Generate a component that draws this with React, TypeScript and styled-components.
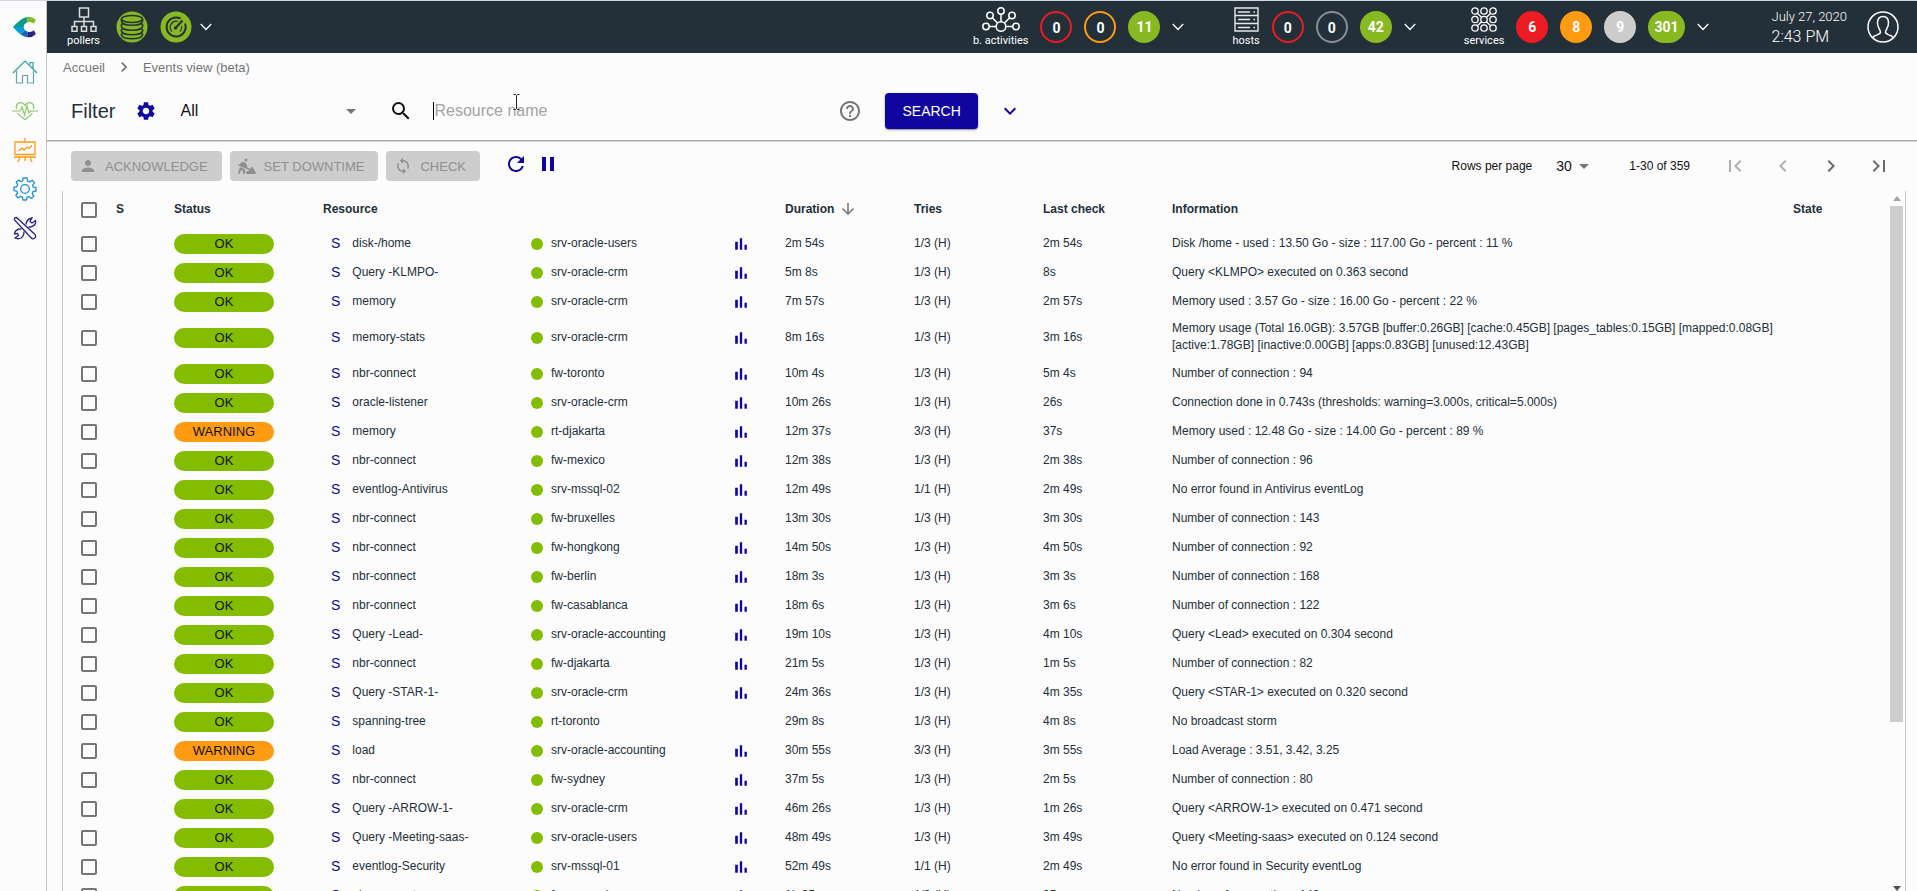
import React from "react";
import styled, { createGlobalStyle } from "styled-components";
import {
  MdArrowDownward,
  MdArrowDropDown,
  MdChevronLeft,
  MdChevronRight,
  MdExpandMore,
  MdFirstPage,
  MdHelpOutline,
  MdLastPage,
  MdPause,
  MdPerson,
  MdRefresh,
  MdSearch,
  MdSettings,
  MdSync,
} from "react-icons/md";
import { FaPersonDigging } from "react-icons/fa6";

const GlobalStyle = createGlobalStyle`
  *, *::before, *::after { box-sizing: border-box; }
  body {
    margin: 0;
    background: #fcfcfc;
    color: #232f39;
    font-family: "Liberation Sans", Arial, sans-serif;
    font-size: 12px;
    line-height: 17px;
  }
  button, input, select { font-family: inherit; }
  svg { display: block; flex: none; }
`;

const palette = {
  navy: "#10069f",
  ok: "#84bd00",
  green: "#88b922",
  orange: "#ff9a13",
  red: "#ed1c24",
  grey: "#cdcdcd",
  bar: "#232f39",
};

const Shell = styled.div`
  display: flex;
  height: 100vh;
  overflow: hidden;
  border-top: 1px solid #d2d6e2;
`;

const Sidebar = styled.nav`
  display: flex;
  flex-direction: column;
  align-items: center;
  width: 47px;
  padding: 12px 0 0 3px;
  border-right: 1px solid #c4c4c8;
  flex: none;
`;

const SideLink = styled.a`
  display: flex;
  align-items: center;
  justify-content: center;
  width: 28px;
  height: 39px;
`;

const LogoLink = styled(SideLink)`
  height: 28px;
  margin-bottom: 11px;
`;

const Main = styled.main`
  display: flex;
  flex-direction: column;
  flex: 1;
  min-width: 0;
`;

const TopBar = styled.header`
  display: flex;
  align-items: center;
  height: 52px;
  flex: none;
  padding: 0 18px 0 20px;
  background: ${palette.bar};
  color: #fff;
  font-family: Roboto, sans-serif;
`;

const PollerGroup = styled.div`
  display: flex;
  align-items: center;
  gap: 8px;
  margin-right: auto;
`;

const PollerBadges = styled.div`
  display: flex;
  gap: 12px;
  margin-left: 8px;
`;

const StatusGroup = styled.div`
  display: flex;
  align-items: center;
  gap: 12px;
  margin-right: 48px;
`;

const IconLabel = styled.a`
  display: flex;
  flex-direction: column;
  align-items: center;
  gap: 2px;
  color: #fff;
  font-size: 11px;
  line-height: 14px;
  text-decoration: none;
  white-space: nowrap;
`;

const Badge = styled.a<{ $color: string; $outlined?: boolean }>`
  display: flex;
  align-items: center;
  justify-content: center;
  min-width: 32px;
  height: 32px;
  padding: ${(p) => (p.$outlined ? "2px 0 0" : "0 4px")};
  border: 2px solid ${(p) => p.$color};
  border-radius: 16px;
  background: ${(p) => (p.$outlined ? "transparent" : p.$color)};
  color: #fff;
  font-size: 14px;
  font-weight: 700;
  text-decoration: none;
`;

const BareButton = styled.button<{ $color?: string }>`
  display: flex;
  align-items: center;
  justify-content: center;
  padding: 0;
  border: 0;
  background: none;
  color: ${(p) => p.$color ?? "inherit"};
`;

const Clock = styled.div`
  margin: 0 20px 0 15px;
  font-size: 13px;
  font-weight: 300;
  line-height: 20px;
`;

const ClockTime = styled.div`
  font-size: 16px;
`;

const Breadcrumb = styled.nav`
  display: flex;
  align-items: center;
  gap: 9px;
  height: 28px;
  padding-left: 16px;
  flex: none;
  color: #757575;
  font-size: 13px;

  a {
    color: inherit;
    text-decoration: none;
  }
`;

const FilterBar = styled.form`
  display: flex;
  align-items: center;
  height: 60px;
  padding: 0 24px;
  flex: none;
  border-bottom: 1px solid #a6a6a6;
  box-shadow: 0 1px 0 #d4d4d4;
`;

const FilterTitle = styled.h1`
  margin: 0 20px 0 0;
  font-size: 20px;
  font-weight: 400;
  line-height: 24px;
`;

const SelectBox = styled.span<{ $width: number; $size: number; $indent?: number }>`
  display: grid;
  align-items: center;
  width: ${(p) => p.$width}px;
  font-size: ${(p) => p.$size}px;

  > * {
    grid-area: 1 / 1;
  }
  > svg {
    justify-self: end;
    color: #757575;
    pointer-events: none;
  }
  > select {
    width: 100%;
    padding: 0 0 0 ${(p) => p.$indent ?? 0}px;
    border: 0;
    background: none;
    appearance: none;
    color: #111;
    font-size: inherit;
    line-height: 24px;
  }
`;

const SearchField = styled.label`
  position: relative;
  display: flex;
  align-items: center;
  width: 449px;
  margin-left: 26px;
  color: #111;
`;

const TextCaret = styled.span`
  width: 1px;
  height: 18px;
  margin-left: 20px;
  background: #000;
`;

const SearchInput = styled.input`
  flex: 1;
  min-width: 0;
  padding: 0;
  border: 0;
  outline: 0;
  background: none;
  font-size: 16px;
  line-height: 24px;

  &::placeholder {
    color: #a3a3a3;
    opacity: 1;
  }
`;

const PointerMark = styled.svg`
  position: absolute;
  left: 124px;
  top: -5px;
`;

const SearchButton = styled.button`
  height: 36px;
  margin: 0 20px 0 23px;
  padding: 0 17px;
  border: 0;
  border-radius: 4px;
  background: ${palette.navy};
  box-shadow: 0 1px 2px rgba(0, 0, 0, 0.45);
  color: #fff;
  font-size: 14px;
`;

const Toolbar = styled.div`
  display: flex;
  align-items: center;
  gap: 8px;
  height: 50px;
  padding: 0 14px 0 24px;
  flex: none;
`;

const ActionButton = styled.button`
  display: flex;
  align-items: center;
  gap: 8px;
  height: 30px;
  padding: 0 14px 0 8px;
  border: 0;
  border-radius: 4px;
  background: #cdcdcd;
  color: #8f8f8f;
  font-size: 13px;
`;

const RefreshGroup = styled.div`
  display: flex;
  gap: 8px;
  margin: 0 auto 4px 16px;
`;

const Pager = styled.div`
  display: flex;
  align-items: center;
  color: #111;

  label {
    display: flex;
    align-items: center;
    gap: 24px;
    margin-right: 33px;
  }
`;

const PageButton = styled(BareButton)`
  width: 48px;
  height: 48px;
  color: #6b6b6b;

  &:disabled {
    color: #b0b0b0;
  }
`;

const PageButtons = styled.div`
  display: flex;
  margin-left: 21px;
`;

const ListFrame = styled.section`
  display: flex;
  flex: 1;
  min-height: 0;
  margin: 0 11px 0 15px;
  border: solid #c9c9c9;
  border-width: 0 1px;
`;

const ListViewport = styled.div`
  flex: 1;
  min-width: 0;
  overflow: hidden;
`;

const ScrollTrack = styled.div`
  display: flex;
  flex-direction: column;
  align-items: center;
  width: 17px;
  padding: 5px 2px 0 2px;
  color: #a0a0a0;
`;

const ScrollRail = styled.div`
  align-self: stretch;
  flex: 1;
  margin: 5px 0 1px;
`;

const ScrollThumb = styled.div`
  height: 76%;
  background: #cdcdcd;
`;

const Table = styled.table`
  width: 100%;
  border-collapse: collapse;
  table-layout: fixed;

  th,
  td {
    height: 29px;
    padding: 3px 0 6px;
    text-align: left;
    vertical-align: middle;
  }
  th {
    height: 39px;
    font-weight: 700;
  }
  td.control,
  th.control {
    padding: 0 0 1px;
  }
`;

const Col = styled.col<{ $w?: number }>`
  width: ${(p) => (p.$w ? `${p.$w}px` : "auto")};
`;

const Check = styled.input`
  display: block;
  width: 16px;
  height: 16px;
  margin: 0 0 0 18px;
  border: 2px solid #757575;
  border-radius: 2px;
  appearance: none;
`;

const StatusPill = styled.span<{ $warning: boolean }>`
  display: block;
  width: 100px;
  height: 20px;
  border-radius: 10px;
  background: ${(p) => (p.$warning ? palette.orange : palette.ok)};
  color: #111;
  font-size: 13px;
  line-height: 19px;
  text-align: center;
`;

const Resource = styled.div`
  display: flex;
  gap: 12px;
  padding-left: 8px;
`;

const TypeMark = styled.span`
  color: ${palette.navy};
  font-size: 14px;
`;

const Parent = styled.div`
  display: flex;
  align-items: center;
  gap: 8px;

  &::before {
    content: "";
    width: 12px;
    height: 12px;
    margin-top: 2px;
    border-radius: 50%;
    background: ${palette.ok};
  }
`;

const SortHeader = styled(BareButton)`
  gap: 5px;
  font-size: 12px;
  font-weight: 700;
  line-height: 17px;
`;

const Logo = () => (
  <svg width="24" height="22" viewBox="0 0 24 22">
    <path d="M13.7.9 Q7 2.5 0 11 H10.7 Q10.9 7.4 14.7 6.3Z" fill="#0c9a8d" />
    <path d="M13.7.9 Q18.8 0 22.8 3.7 L21 7.6 Q18 5.3 14.7 6.3Z" fill="#86b92a" />
    <path d="M0 11 Q3.5 15.6 7.6 18.4 L11.8 14 Q10.7 12.6 10.7 11Z" fill="#009fdf" />
    <path d="M7.6 18.4 Q10.6 20.6 14 21.2 L15 15.7 Q13 15.4 11.8 14Z" fill="#1268b3" />
    <path d="M14 21.2 Q19 22 22.8 18.3 L21 14.3 Q18.5 16.6 15 15.7Z" fill="#2b2380" />
  </svg>
);

const HomeIcon = () => (
  <svg width="26" height="26" viewBox="0 0 26 26" fill="none" stroke="#2ba0a0" strokeWidth="1.2">
    <path d="M1 14 L13 2 L25 14 M18 5.500V3.500H21V10" />
    <path d="M4.500 12 V24 H10.500 V16.500 H15.500 V24 H21.500 V12" stroke="#6a9fb0" />
  </svg>
);

const HeartIcon = () => (
  <svg width="26" height="20" viewBox="0 0 26 20" fill="none" stroke="#8cc56a" strokeWidth="1.2">
    <path d="M4.500 8 C3 1 10.500 0 13 4.500 C15.500 0 23 1 21.500 8 M5.500 12 C7.500 15 10.500 16.500 13 18.500 C15.500 16.500 18.500 15 20.500 12" />
    <path d="M0 10 H8 L10 6 L12.500 14 L15 4.500 L17 12 L18.500 10 H26" />
  </svg>
);

const EaselIcon = () => (
  <svg width="24" height="26" viewBox="0 0 24 26" fill="none" stroke="#ff9a13" strokeWidth="1.3">
    <path d="M2 5 H22 V17.500 H2Z M12 1 V5 M1 20 H23 M7 20 L5 25 M17 20 L19 25 M12 20V24" />
    <path d="M5.500 14 L9 11 L11 13 L14 10 L16 11.500 L19 8.500" />
  </svg>
);

const GearIcon = () => (
  <svg width="24" height="24" viewBox="0 0 24 24" fill="none" stroke="#1b92d8" strokeWidth="1.300">
    <circle cx="12" cy="12" r="4.300" />
    <path
      strokeLinejoin="round"
      d="M10 1H14L14.600 4.100L16.600 4.900L19.200 3.200L21.500 5.900L19.500 8.300L20.200 10.100L23 10.500V14L20 14.600L19.200 16.600L20.800 19.200L18.200 21.400L15.900 19.600L14 20.300L13.500 23H10L9.500 20.200L7.600 19.400L5 20.900L2.800 18.300L4.500 16L3.800 14.200L1 13.600V10.200L3.900 9.600L4.700 7.600L3.200 5.200L5.800 3L8.100 4.600L9.700 4Z"
    />
  </svg>
);

const ToolsIcon = () => (
  <svg width="24" height="24" viewBox="0 0 24 24" fill="none" stroke="#2b2380" strokeWidth="1.300">
    <path d="M1.500 4 Q1 1.500 3.500 1.500 L22 18.500 Q23.500 21 21.500 22.500 Q19.500 23.500 17.800 21.500Z" />
    <path d="M13 8.500 Q13.500 3 19 2 L17 5.500 L19 7 L22.500 4.500 Q23.500 9.500 17.500 11 L15.500 11 M11 15.500 Q11 20 8 22 Q5 23.500 2 22 L5.500 19.500 L4.500 17.500 L1.500 18 Q2 13.500 7 13 L8.500 12.800" />
  </svg>
);

const PollersIcon = () => (
  <svg width="26" height="25" viewBox="0 0 26 25" fill="none" stroke="#dcdcdc" strokeWidth="1.500">
    <path d="M8.500 1 H17.500 V10 H8.500Z M13 10 V19 M3.500 19 V14.500 H22.500 V19" />
    <path d="M1 19.500H6V24.200H1Z M10.500 19.500H15.500V24.200H10.500Z M20 19.500H25V24.200H20Z" />
  </svg>
);

const DatabaseIcon = () => (
  <svg width="32" height="32" viewBox="0 0 32 32" fill="none" stroke="#232f39" strokeWidth="1.600">
    <circle cx="16" cy="16" r="15.500" fill={palette.green} stroke="none" />
    <ellipse cx="16" cy="8" rx="10.500" ry="3.500" />
    <path d="M5.500 8 V10.500 C5.500 15.500 26.500 15.500 26.500 10.500 V8 M5.500 13 V15.500 C5.500 20.500 26.500 20.500 26.500 15.500 V13 M5.500 18 V20 C5.500 25 26.500 25 26.500 20 V18 M5.500 22.500 V24 C7 29 25 29 26.500 24 V22.500" />
  </svg>
);

const GaugeIcon = () => (
  <svg width="32" height="32" viewBox="0 0 32 32" fill="none" stroke="#232f39" strokeWidth="2">
    <circle cx="16" cy="16" r="15.500" fill={palette.green} stroke="none" />
    <path d="M20.500 7.500 A9.500 9.500 0 1 0 25 12.500" />
    <path d="M12 20.500 A6 6 0 0 1 18 10.500 M21.500 15 A6 6 0 0 1 20 20.500" strokeWidth="1.200" />
    <path d="M15.500 17 L22.500 9.500" strokeWidth="2" />
    <circle cx="15.500" cy="17" r="1.700" fill="#232f39" stroke="none" />
  </svg>
);

const ActivitiesIcon = () => (
  <svg width="38" height="25" viewBox="0 0 38 25" fill="none" stroke="#fff" strokeWidth="1.500">
    <circle cx="19" cy="19.500" r="4.800" />
    <circle cx="19" cy="4" r="3.200" />
    <circle cx="8" cy="8.500" r="3.200" />
    <circle cx="30" cy="8.500" r="3.200" />
    <circle cx="4" cy="19.500" r="3.200" />
    <circle cx="34" cy="19.500" r="3.200" />
    <path d="M19 7V15 M10.300 10.800L15.500 16 M27.700 10.800L22.500 16 M7 19.500H14 M24 19.500H31" />
  </svg>
);

const HostsIcon = () => (
  <svg width="25" height="25" viewBox="0 0 25 25" fill="none" stroke="#e8e8e8" strokeWidth="1.400">
    <path d="M1 1H24V8.500H1Z M1 8.500H24V16.500H1Z M1 16.500H24V24H1Z" />
    <path d="M4 5H16 M19.500 5H21 M4 12.500H16 M19.500 12.500H21 M4 20.500H16 M19.500 20.500H21" />
  </svg>
);

const ServicesIcon = () => (
  <svg width="26" height="25" viewBox="0 0 26 25" fill="none" stroke="#fff" strokeWidth="1.300">
    {[4, 13, 22].map((x) =>
      [4, 12.5, 21].map((y) => <circle key={`${x}-${y}`} cx={x} cy={y} r="3.200" />)
    )}
    <path d="M6.300 6.300L10.700 10.400M19.700 6.300L15.300 10.400M6.300 18.700L10.700 14.700M19.700 18.700L15.300 14.700" />
  </svg>
);

const ThinChevron = () => (
  <svg width="12" height="8" viewBox="0 0 12 8" fill="none" stroke="#fff" strokeWidth="1.300">
    <path d="M.8 1 L6 6.500 L11.200 1" />
  </svg>
);

const UserIcon = () => (
  <svg width="32" height="32" viewBox="0 0 32 32" fill="none" stroke="#fff" strokeWidth="1.500">
    <circle cx="16" cy="16" r="15" />
    <path d="M5.500 26.500 C8 23.500 13 24 13.500 21.500 C13.800 19 10.500 17.500 10.500 12 C10.500 8 12.500 5.500 16 5.500 C19.500 5.500 21.500 8 21.500 12 C21.500 17.500 18.200 19 18.500 21.500 C19 24 24 23.500 26.500 26.500" />
  </svg>
);

const GraphIcon = () => (
  <svg width="20" height="20" viewBox="0 0 24 24" fill={palette.navy}>
    <path d="M5 9.200h3.200V19H5z M10.600 5h2.800v14h-2.800z M16.200 13H19v6h-2.800z" />
  </svg>
);

const ScrollArrow = ({ down }: { down?: boolean }) => (
  <svg width="8" height="5" viewBox="0 0 8 5" fill={down ? "#505050" : "#a3a3a3"}>
    <path d={down ? "M0 0H8L4 5Z" : "M0 5H8L4 0Z"} />
  </svg>
);

type Row = {
  name: string;
  parent: string;
  duration: string;
  last: string;
  info: string;
  tries?: string;
  warning?: boolean;
  noGraph?: boolean;
};

const rows: Row[] = [
  { name: "disk-/home", parent: "srv-oracle-users", duration: "2m 54s", last: "2m 54s", info: "Disk /home - used : 13.50 Go - size : 117.00 Go - percent : 11 %" },
  { name: "Query -KLMPO-", parent: "srv-oracle-crm", duration: "5m 8s", last: "8s", info: "Query <KLMPO> executed on 0.363 second" },
  { name: "memory", parent: "srv-oracle-crm", duration: "7m 57s", last: "2m 57s", info: "Memory used : 3.57 Go - size : 16.00 Go - percent : 22 %" },
  { name: "memory-stats", parent: "srv-oracle-crm", duration: "8m 16s", last: "3m 16s", info: "Memory usage (Total 16.0GB): 3.57GB [buffer:0.26GB] [cache:0.45GB] [pages_tables:0.15GB] [mapped:0.08GB] [active:1.78GB] [inactive:0.00GB] [apps:0.83GB] [unused:12.43GB]" },
  { name: "nbr-connect", parent: "fw-toronto", duration: "10m 4s", last: "5m 4s", info: "Number of connection : 94" },
  { name: "oracle-listener", parent: "srv-oracle-crm", duration: "10m 26s", last: "26s", info: "Connection done in 0.743s (thresholds: warning=3.000s, critical=5.000s)" },
  { name: "memory", parent: "rt-djakarta", duration: "12m 37s", last: "37s", tries: "3/3 (H)", warning: true, info: "Memory used : 12.48 Go - size : 14.00 Go - percent : 89 %" },
  { name: "nbr-connect", parent: "fw-mexico", duration: "12m 38s", last: "2m 38s", info: "Number of connection : 96" },
  { name: "eventlog-Antivirus", parent: "srv-mssql-02", duration: "12m 49s", last: "2m 49s", tries: "1/1 (H)", info: "No error found in Antivirus eventLog" },
  { name: "nbr-connect", parent: "fw-bruxelles", duration: "13m 30s", last: "3m 30s", info: "Number of connection : 143" },
  { name: "nbr-connect", parent: "fw-hongkong", duration: "14m 50s", last: "4m 50s", info: "Number of connection : 92" },
  { name: "nbr-connect", parent: "fw-berlin", duration: "18m 3s", last: "3m 3s", info: "Number of connection : 168" },
  { name: "nbr-connect", parent: "fw-casablanca", duration: "18m 6s", last: "3m 6s", info: "Number of connection : 122" },
  { name: "Query -Lead-", parent: "srv-oracle-accounting", duration: "19m 10s", last: "4m 10s", info: "Query <Lead> executed on 0.304 second" },
  { name: "nbr-connect", parent: "fw-djakarta", duration: "21m 5s", last: "1m 5s", info: "Number of connection : 82" },
  { name: "Query -STAR-1-", parent: "srv-oracle-crm", duration: "24m 36s", last: "4m 35s", info: "Query <STAR-1> executed on 0.320 second" },
  { name: "spanning-tree", parent: "rt-toronto", duration: "29m 8s", last: "4m 8s", noGraph: true, info: "No broadcast storm" },
  { name: "load", parent: "srv-oracle-accounting", duration: "30m 55s", last: "3m 55s", tries: "3/3 (H)", warning: true, info: "Load Average : 3.51, 3.42, 3.25" },
  { name: "nbr-connect", parent: "fw-sydney", duration: "37m 5s", last: "2m 5s", info: "Number of connection : 80" },
  { name: "Query -ARROW-1-", parent: "srv-oracle-crm", duration: "46m 26s", last: "1m 26s", info: "Query <ARROW-1> executed on 0.471 second" },
  { name: "Query -Meeting-saas-", parent: "srv-oracle-users", duration: "48m 49s", last: "3m 49s", info: "Query <Meeting-saas> executed on 0.124 second" },
  { name: "eventlog-Security", parent: "srv-mssql-01", duration: "52m 49s", last: "2m 49s", tries: "1/1 (H)", info: "No error found in Security eventLog" },
  { name: "nbr-connect", parent: "fw-newyork", duration: "1h 35s", last: "35s", info: "Number of connection : 140" },
];

const columnWidths = [53, 58, 149, 208, 200, 54, 129, 129, 129, undefined, 95];

const EventRow = ({ row }: { row: Row }) => (
  <tr>
    <td className="control">
      <Check type="checkbox" aria-label={`Select ${row.name} on ${row.parent}`} />
    </td>
    <td />
    <td className="control">
      <StatusPill $warning={!!row.warning}>{row.warning ? "WARNING" : "OK"}</StatusPill>
    </td>
    <td>
      <Resource>
        <TypeMark>S</TypeMark>
        <span>{row.name}</span>
      </Resource>
    </td>
    <td>
      <Parent>{row.parent}</Parent>
    </td>
    <td className="control">
      {!row.noGraph && (
        <BareButton aria-label={`Graph of ${row.name}`}>
          <GraphIcon />
        </BareButton>
      )}
    </td>
    <td>{row.duration}</td>
    <td>{row.tries ?? "1/3 (H)"}</td>
    <td>{row.last}</td>
    <td>{row.info}</td>
    <td />
  </tr>
);

const App = () => (
  <>
    <GlobalStyle />
    <Shell>
      <Sidebar aria-label="Main">
        <LogoLink href="#" aria-label="Start"><Logo /></LogoLink>
        <SideLink href="#home" aria-label="Home"><HomeIcon /></SideLink>
        <SideLink href="#monitoring" aria-label="Monitoring"><HeartIcon /></SideLink>
        <SideLink href="#reporting" aria-label="Reporting"><EaselIcon /></SideLink>
        <SideLink href="#configuration" aria-label="Configuration"><GearIcon /></SideLink>
        <SideLink href="#administration" aria-label="Administration"><ToolsIcon /></SideLink>
      </Sidebar>
      <Main>
        <TopBar>
          <PollerGroup>
            <IconLabel href="#pollers"><PollersIcon />pollers</IconLabel>
            <PollerBadges>
              <BareButton aria-label="Database status"><DatabaseIcon /></BareButton>
              <BareButton aria-label="Latency status"><GaugeIcon /></BareButton>
            </PollerBadges>
            <BareButton aria-label="Expand pollers"><ThinChevron /></BareButton>
          </PollerGroup>
          <StatusGroup>
            <IconLabel href="#activities"><ActivitiesIcon />b. activities</IconLabel>
            <Badge href="#" $color={palette.red} $outlined>0</Badge>
            <Badge href="#" $color={palette.orange} $outlined>0</Badge>
            <Badge href="#" $color={palette.green}>11</Badge>
            <BareButton aria-label="Expand activities"><ThinChevron /></BareButton>
          </StatusGroup>
          <StatusGroup>
            <IconLabel href="#hosts"><HostsIcon />hosts</IconLabel>
            <Badge href="#" $color={palette.red} $outlined>0</Badge>
            <Badge href="#" $color="#8b8f94" $outlined>0</Badge>
            <Badge href="#" $color={palette.green}>42</Badge>
            <BareButton aria-label="Expand hosts"><ThinChevron /></BareButton>
          </StatusGroup>
          <StatusGroup>
            <IconLabel href="#services"><ServicesIcon />services</IconLabel>
            <Badge href="#" $color={palette.red}>6</Badge>
            <Badge href="#" $color={palette.orange}>8</Badge>
            <Badge href="#" $color={palette.grey}>9</Badge>
            <Badge href="#" $color={palette.green}>301</Badge>
            <BareButton aria-label="Expand services"><ThinChevron /></BareButton>
          </StatusGroup>
          <Clock>
            July 27, 2020
            <ClockTime>2:43 PM</ClockTime>
          </Clock>
          <BareButton aria-label="Profile"><UserIcon /></BareButton>
        </TopBar>

        <Breadcrumb aria-label="Breadcrumb">
          <a href="#accueil">Accueil</a>
          <MdChevronRight size={20} />
          <a href="#events">Events view (beta)</a>
        </Breadcrumb>

        <FilterBar onSubmit={(e) => e.preventDefault()}>
          <FilterTitle>Filter</FilterTitle>
          <BareButton type="button" $color={palette.navy} aria-label="Edit filters">
            <MdSettings size={22} />
          </BareButton>
          <SelectBox $width={206} $size={16} $indent={23}>
            <select aria-label="Saved filter" defaultValue="All">
              <option>All</option>
            </select>
            <MdArrowDropDown size={24} />
          </SelectBox>
          <SearchField>
            <MdSearch size={24} />
            <TextCaret />
            <SearchInput type="text" placeholder="Resource name" aria-label="Resource name" />
            <PointerMark width="7" height="16" viewBox="0 0 7 16" fill="none" stroke="#222">
              <path d="M.5 .5H2.500L3.500 1.500L4.500 .5H6.500 M3.500 1.500V14.500 M.5 15.500H2.500L3.500 14.500L4.500 15.500H6.500" />
            </PointerMark>
          </SearchField>
          <BareButton type="button" $color="#757575" aria-label="Search help">
            <MdHelpOutline size={24} />
          </BareButton>
          <SearchButton type="submit">SEARCH</SearchButton>
          <BareButton type="button" $color={palette.navy} aria-label="More criteria">
            <MdExpandMore size={24} />
          </BareButton>
        </FilterBar>

        <Toolbar>
          <ActionButton disabled><MdPerson size={18} />ACKNOWLEDGE</ActionButton>
          <ActionButton disabled><FaPersonDigging size={18} />SET DOWNTIME</ActionButton>
          <ActionButton disabled><MdSync size={18} />CHECK</ActionButton>
          <RefreshGroup>
            <BareButton $color={palette.navy} aria-label="Refresh"><MdRefresh size={24} /></BareButton>
            <BareButton $color={palette.navy} aria-label="Pause"><MdPause size={24} /></BareButton>
          </RefreshGroup>
          <Pager>
            <label>
              Rows per page
              <SelectBox $width={40} $size={14}>
                <select defaultValue="30">
                  <option>30</option>
                </select>
                <MdArrowDropDown size={24} />
              </SelectBox>
            </label>
            1-30 of 359
            <PageButtons>
              <PageButton disabled aria-label="First page"><MdFirstPage size={24} /></PageButton>
              <PageButton disabled aria-label="Previous page"><MdChevronLeft size={24} /></PageButton>
              <PageButton aria-label="Next page"><MdChevronRight size={24} /></PageButton>
              <PageButton aria-label="Last page"><MdLastPage size={24} /></PageButton>
            </PageButtons>
          </Pager>
        </Toolbar>

        <ListFrame>
          <ListViewport>
            <Table>
              <colgroup>
                {columnWidths.map((w, i) => (
                  <Col key={i} $w={w} />
                ))}
              </colgroup>
              <thead>
                <tr>
                  <th className="control"><Check type="checkbox" aria-label="Select all" /></th>
                  <th>S</th>
                  <th>Status</th>
                  <th colSpan={3}>Resource</th>
                  <th>
                    <SortHeader>
                      Duration
                      <MdArrowDownward size={18} color="#757575" />
                    </SortHeader>
                  </th>
                  <th>Tries</th>
                  <th>Last check</th>
                  <th>Information</th>
                  <th>State</th>
                </tr>
              </thead>
              <tbody>
                {rows.map((row) => (
                  <EventRow key={row.duration} row={row} />
                ))}
              </tbody>
            </Table>
          </ListViewport>
          <ScrollTrack>
            <ScrollArrow />
            <ScrollRail><ScrollThumb /></ScrollRail>
            <ScrollArrow down />
          </ScrollTrack>
        </ListFrame>
      </Main>
    </Shell>
  </>
);

export default App;
